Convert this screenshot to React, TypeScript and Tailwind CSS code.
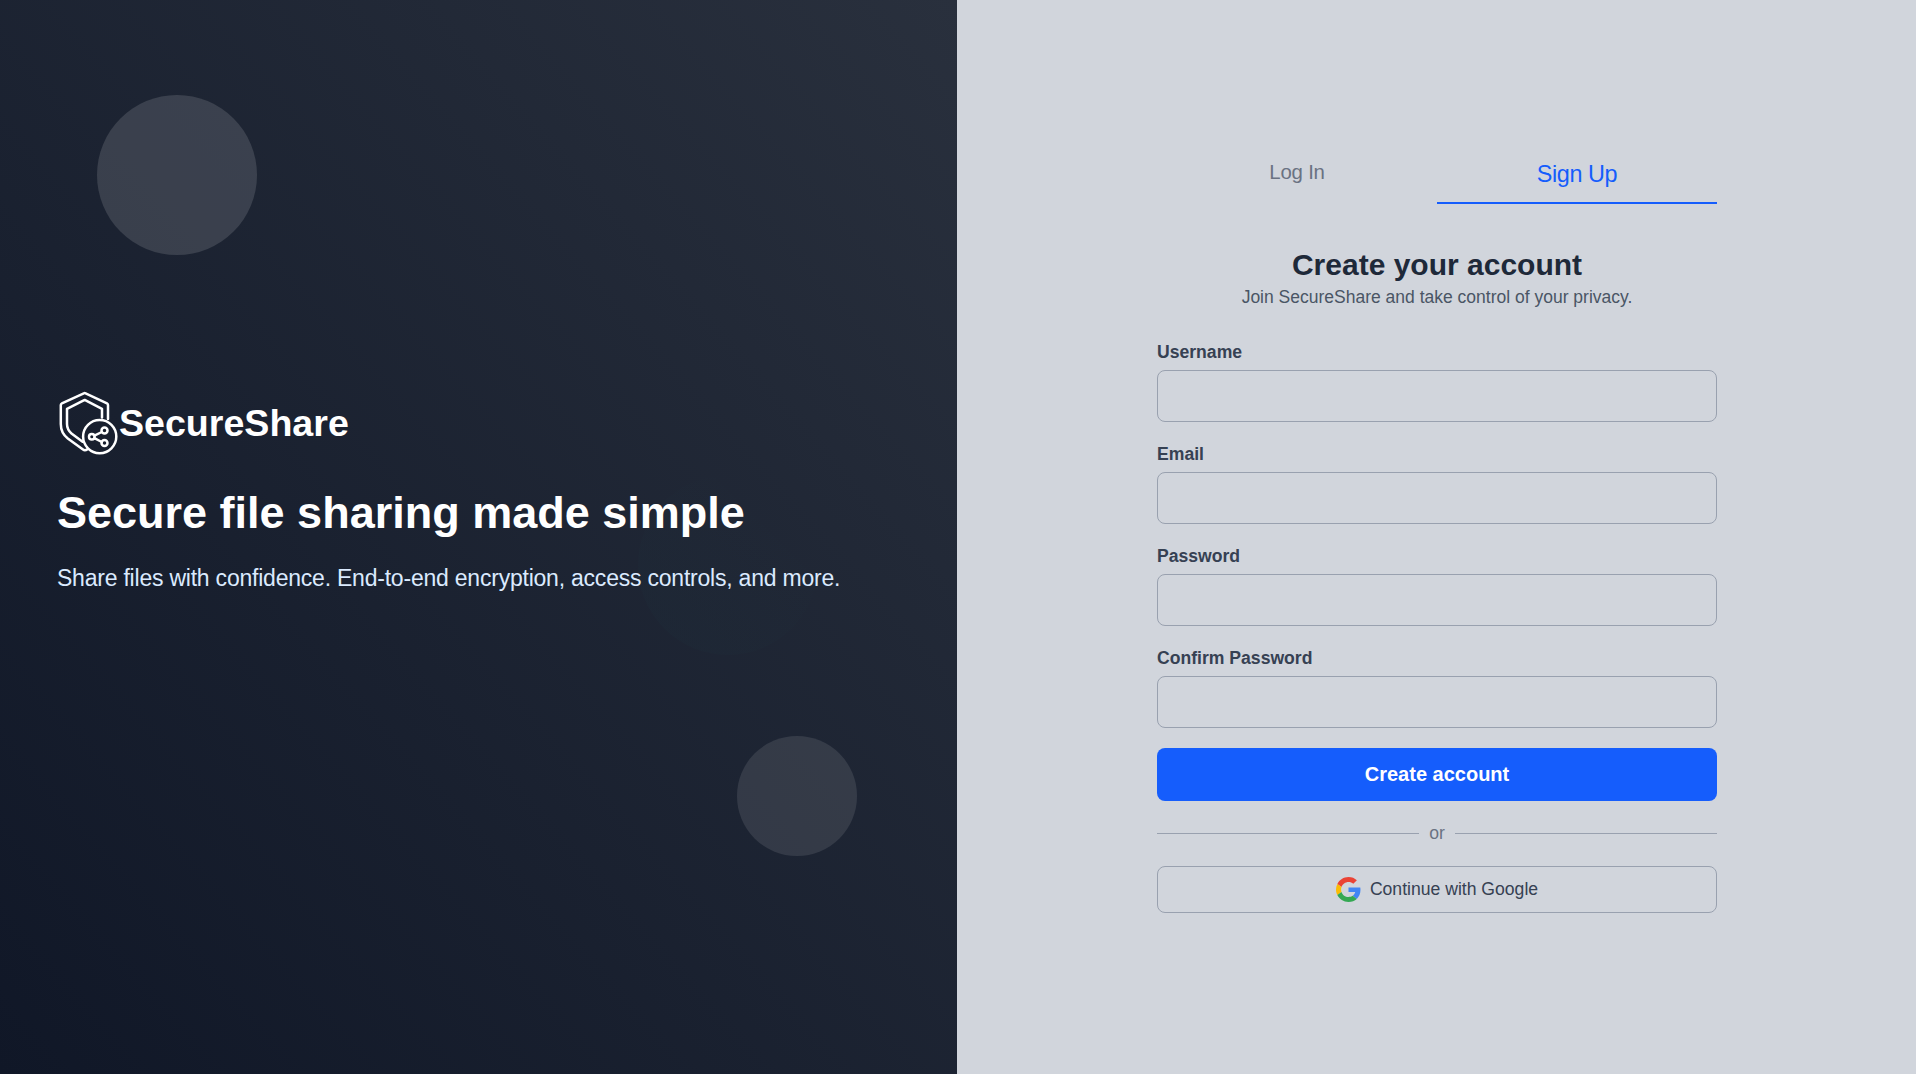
import React, { useState } from "react";

function Logo() {
  return (
    <svg className="h-16 w-[61px] shrink-0" viewBox="0 0 61 64" fill="none" stroke="white" strokeWidth="2.5" strokeLinejoin="round" strokeLinecap="round">
      <path d="M51 28V14Q51 12.8 50 12.3L28.6 2.3Q27.7 1.9 26.8 2.3L4.9 12.3Q3.8 12.8 3.8 14V33Q3.8 42 10.8 47.5L26 58.6Q28 60 30.5 58.2" />
      <path d="M45 26.5V17.8L27.7 8.9L10 17.8V33Q10 38.5 14.5 42.5L25.6 50.8" />
      <circle cx="42.7" cy="45.6" r="16.6" />
      <path d="M37.4 44.6L44.8 41M37.4 47.2L44.8 51" />
      <circle cx="34.8" cy="45.8" r="2.8" />
      <circle cx="47.5" cy="39.6" r="3" />
      <circle cx="47.5" cy="52" r="3" />
    </svg>
  );
}

function GoogleIcon() {
  return (
    <svg className="size-[25px]" viewBox="0 0 48 48">
      <path fill="#EA4335" d="M24 9.5c3.54 0 6.71 1.22 9.21 3.6l6.85-6.85C35.9 2.38 30.47 0 24 0 14.62 0 6.51 5.38 2.56 13.22l7.98 6.19C12.43 13.72 17.74 9.5 24 9.5z" />
      <path fill="#4285F4" d="M46.98 24.55c0-1.57-.15-3.09-.38-4.55H24v9.02h12.94c-.58 2.96-2.26 5.48-4.78 7.18l7.73 6c4.51-4.18 7.09-10.36 7.09-17.65z" />
      <path fill="#FBBC05" d="M10.53 28.59c-.48-1.45-.76-2.99-.76-4.59s.27-3.14.76-4.59l-7.98-6.19C.92 16.46 0 20.12 0 24c0 3.88.92 7.54 2.56 10.78l7.97-6.19z" />
      <path fill="#34A853" d="M24 48c6.48 0 11.93-2.13 15.89-5.81l-7.73-6c-2.15 1.45-4.92 2.3-8.16 2.3-6.26 0-11.57-4.22-13.47-9.91l-7.98 6.19C6.51 42.62 14.62 48 24 48z" />
    </svg>
  );
}

function Field({ label, type = "text" }: { label: string; type?: string }) {
  return (
    <label className="flex flex-col">
      <span className="mb-1 h-7 text-[17.6px] leading-7 font-bold text-gray-700">{label}</span>
      <input type={type} className="h-[52px] w-full rounded-lg border border-gray-400 bg-transparent px-4 outline-none focus:border-blue-600" />
    </label>
  );
}

export default function App() {
  const [tab, setTab] = useState("signup");
  const active = "h-[54px] border-b-2 border-[#155dfc] text-[23.4px] tracking-[-0.4px] text-[#155dfc] pb-[3px]";
  const idle = "h-[50px] text-[20.4px] tracking-[-0.2px] text-gray-500 pb-[6px]";
  return (
    <div className="flex h-screen w-full overflow-hidden font-['Liberation_Sans',Arial,sans-serif]">
      <section className="relative w-[957px] shrink-0 bg-linear-to-tr from-[#101727] to-[#29303d] px-[57px] pt-[391px]">
        <div className="absolute top-[95px] left-[97px] size-40 rounded-full bg-white/13" />
        <div className="absolute top-[475px] left-[638px] size-[180px] rounded-full bg-linear-to-tr from-teal-500/2 to-transparent to-80%" />
        <div className="absolute top-[736px] left-[737px] size-[120px] rounded-full bg-white/10" />
        <div className="relative flex items-center">
          <Logo />
          <span className="ml-px text-[37.6px] leading-16 font-bold text-white">SecureShare</span>
        </div>
        <h1 className="relative mt-[30px] text-[45px] leading-14 font-bold text-white">Secure file sharing made simple</h1>
        <p className="relative mt-[21px] text-[23px] leading-8 tracking-[-0.22px] text-blue-100">Share files with confidence. End-to-end encryption, access controls, and more.</p>
      </section>
      <main className="flex flex-1 justify-center bg-[#d1d5dc] pt-[150px] pl-px">
        <div className="flex w-[560px] flex-col">
          <nav className="flex h-[54px] items-start">
            <button onClick={() => setTab("login")} className={"flex flex-1 items-center justify-center " + (tab === "login" ? active : idle)}>Log In</button>
            <button onClick={() => setTab("signup")} className={"flex flex-1 items-center justify-center " + (tab === "signup" ? active : idle)}>Sign Up</button>
          </nav>
          <header className="mt-[41px] text-center">
            <h2 className="text-[30px] leading-10 font-bold text-gray-800">Create your account</h2>
            <p className="text-[17.5px] leading-6 text-gray-600">Join SecureShare and take control of your privacy.</p>
          </header>
          <form className="mt-[29px] flex flex-col gap-[18px]" onSubmit={(e) => e.preventDefault()}>
            <Field label="Username" />
            <Field label="Email" type="email" />
            <Field label="Password" type="password" />
            <Field label="Confirm Password" type="password" />
            <button className="mt-0.5 h-[53px] rounded-lg bg-[#155dfc] pb-0.5 text-[20px] font-bold text-white">Create account</button>
          </form>
          <div className="mt-4 flex h-8 items-center gap-2.5 text-[17.6px] text-gray-500">
            <span className="h-px flex-1 bg-gray-400" />
            or
            <span className="h-px flex-1 bg-gray-400" />
          </div>
          <button className="mt-[17px] flex h-[47px] items-center justify-center gap-[9px] rounded-lg border border-gray-400 text-[17.6px] text-gray-700">
            <GoogleIcon />
            Continue with Google
          </button>
        </div>
      </main>
    </div>
  );
}
